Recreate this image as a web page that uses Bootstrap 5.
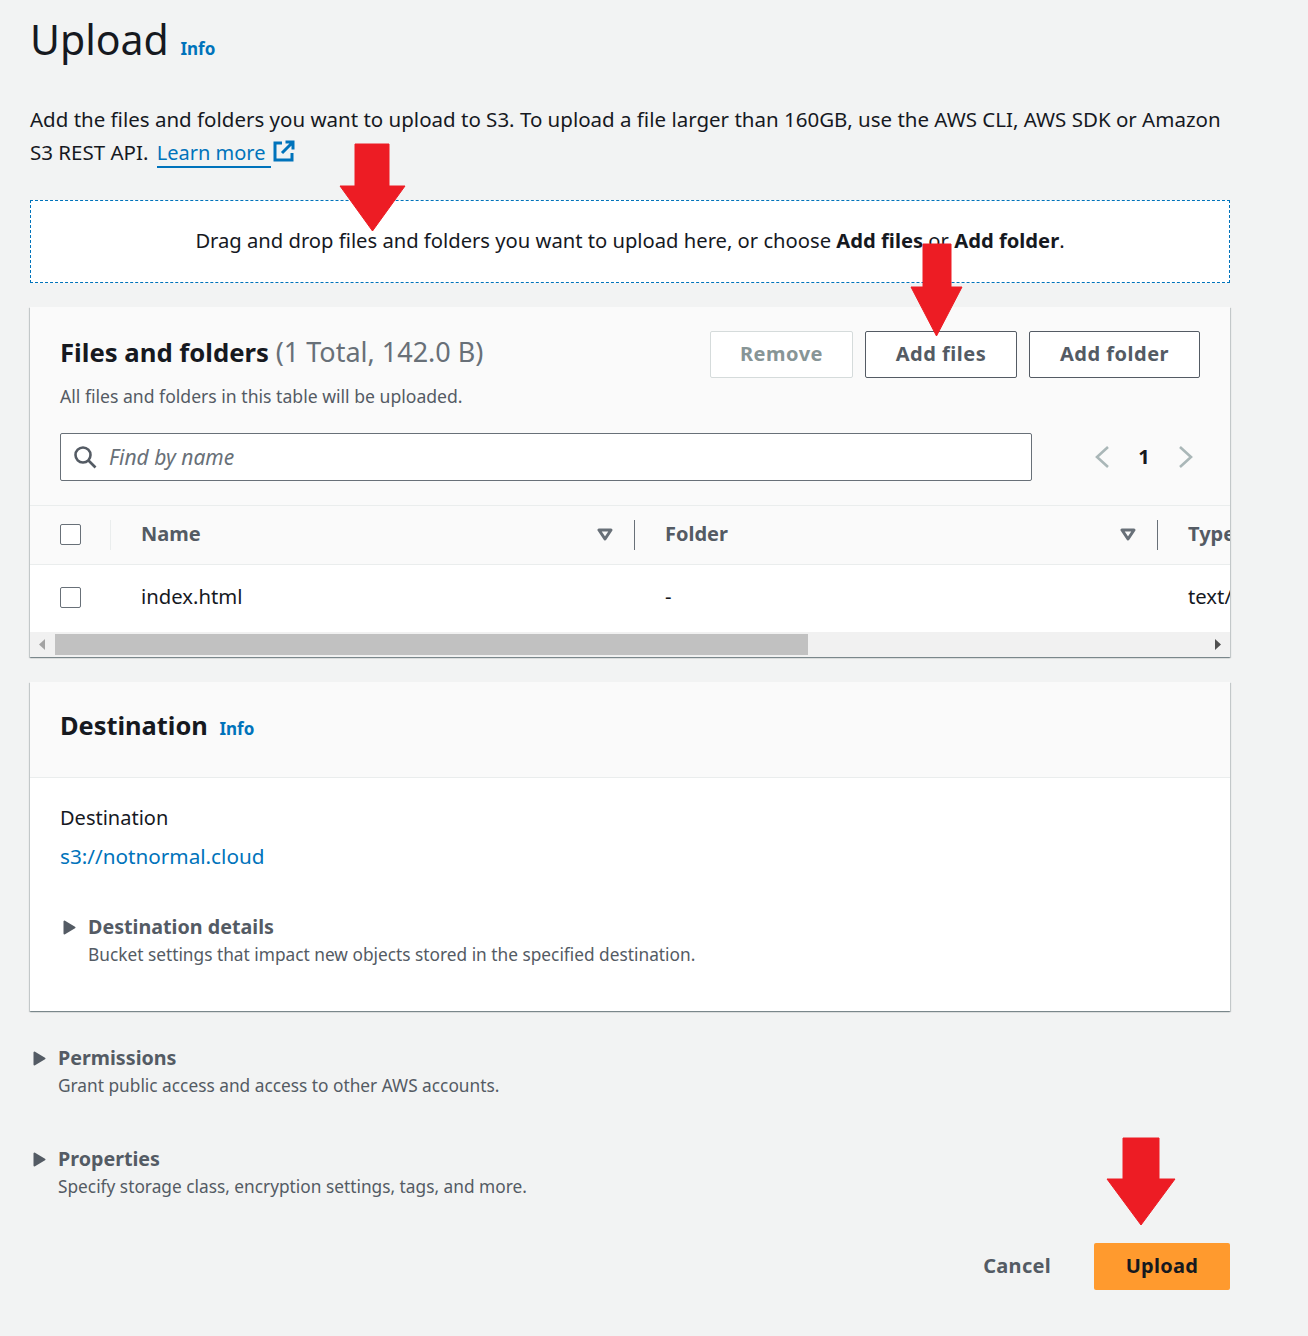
<!DOCTYPE html>
<html lang="en">
<head>
  <meta charset="UTF-8" />
  <title>Upload</title>
  <link rel="stylesheet" href="https://cdn.jsdelivr.net/npm/bootstrap@5.3.3/dist/css/bootstrap.min.css">
  <style>
    body { background: #f2f3f3; color: #16191f; font-family: "Noto Sans", sans-serif; font-size: 20px; }
    a { color: #0073bb; }
    .page-wrap { position: relative; width: 1308px; height: 1336px; padding: 0 78px 0 30px; overflow: hidden; }
    .page-title { font-size: 41px; font-weight: 400; line-height: 50px; margin: 0; padding-top: 14px; }
    .info-link { font-size: 17px; font-weight: 700; text-decoration: none; line-height: 1; }
    .page-title .info-link { margin-left: 1px; }
    .card-h2 .info-link { margin-left: 5px; }
    .intro { font-size: 20.5px; line-height: 33px; margin: 39px 0 31px; height: 66px; }
    .intro a { font-size: 20px; border-bottom: 2px solid #0073bb; text-decoration: none; padding-right: 6px; margin-left: 3px; }
    .intro svg { margin-left: -4px; margin-top: 2px; }
    .drop-zone { height: 83px; background: #fff; border: 1px dashed #0073bb; margin-bottom: 24px; padding-bottom: 2px; font-size: 20.2px; }
    .aws-card { border: 0; border-radius: 0; box-shadow: 0 1px 1px 0 rgba(0,28,36,.3), 1px 1px 1px 0 rgba(0,28,36,.15), -1px 1px 1px 0 rgba(0,28,36,.15); background: #fff; overflow: hidden; }
    .files-card { margin-bottom: 25px; }
    .files-head { background: #fafafa; height: 199px; padding: 24px 30px 0; border-bottom: 1px solid #eaeded; }
    .card-h2 { font-size: 25.7px; font-weight: 700; line-height: 44px; margin: -1px 0 0; }
    .card-h2 span { font-weight: 400; color: #687078; font-size: 27px; }
    .sub-text { font-size: 17.6px; color: #545b64; line-height: 24px; margin-top: 9px; }
    .aws-btn { font-size: 20px; font-weight: 700; height: 47px; padding: 0 0 2px; border: 1px solid #545b64; border-radius: 2px; color: #545b64; background: #fff; letter-spacing: .5px; }
    .aws-btn:disabled { color: #879596; border-color: #d5dbdb; background: #fff; opacity: 1; }
    .btn-remove { width: 143px; }
    .btn-files { width: 152px; }
    .btn-folder { width: 171px; }
    .btn-row { gap: 12px; }
    .search-row { margin-top: 25px; }
    .search-box { width: 972px; height: 48px; border: 1px solid #687078; border-radius: 2px; background: #fff; padding-left: 12px; }
    .search-box svg { flex: none; }
    .search-box input { border: 0; outline: 0; background: transparent; font-size: 21px; font-style: italic; width: 100%; padding: 2px 0 0; margin-left: 4px; }
    .search-box input::placeholder { color: #687078; opacity: 1; }
    .pager-wrap { margin-left: 62px; }
    .pager-num { font-size: 20px; font-weight: 700; width: 68px; text-align: center; }
    .file-table { table-layout: fixed; width: 1500px; margin: 0; }
    .file-table th, .file-table td { padding: 0; vertical-align: middle; border: 0; }
    .file-table thead tr { height: 58px; background: #fafafa; border-bottom: 1px solid #eaeded; }
    .file-table thead th { background: #fafafa; color: #545b64; font-size: 20px; font-weight: 700; }
    .file-table tbody tr { height: 68px; }
    .file-table tbody td { color: #16191f; font-size: 20.3px; padding-bottom: 2px; }
    .col-inner { height: 30px; display: flex; align-items: center; justify-content: space-between; padding-left: 30px; }
    .col-name { margin-top: -2px; }
    .file-table tbody .col-inner { padding-bottom: 2px; }
    .col-tools { gap: 21px; }
    .col-line { width: 1px; height: 30px; background: #687078; }
    .col-line-light { background: #eaeded; }
    .tick-box { width: 21px; height: 21px; border: 1px solid #687078; border-radius: 2px; margin: 0 0 0 30px; display: block; background: #fff; }
    .scroll-bar { height: 25px; background: #f1f1f1; }
    .scroll-thumb { width: 753px; height: 21px; background: #c1c1c1; margin: 2px 0 0 25px; }
    .dest-head { height: 96px; background: #fafafa; border-bottom: 1px solid #eaeded; padding: 0 30px 8px; }
    .dest-head .card-h2 { font-size: 25.4px; }
    .dest-body { height: 233px; padding: 24px 30px 0; }
    .dest-label { line-height: 32px; }
    .dest-link { text-decoration: none; line-height: 44px; display: block; font-size: 20.7px; }
    .dest-fold { margin-top: 35px; }
    .fold-title { font-size: 19.7px; font-weight: 700; color: #545b64; line-height: 28px; }
    .fold-arrow { width: 13px; height: 15px; flex: none; margin-right: 12px; margin-left: 3px; }
    .fold-desc { font-size: 17.3px; color: #545b64; line-height: 28px; padding-left: 28px; }
    .perm-block { margin-top: 33px; }
    .prop-block { margin-top: 45px; }
    .action-row { margin-top: 42px; gap: 43px; }
    .cancel-btn { font-size: 20px; font-weight: 700; color: #545b64; background: none; border: 0; padding: 0 0 2px; letter-spacing: .3px; }
    .upload-btn { width: 136px; height: 47px; background: #ff9a2e; border: 0; border-radius: 2px; font-size: 20px; font-weight: 700; color: #16191f; padding: 0 0 2px; letter-spacing: .3px; }
    .red-arrow { position: absolute; }
    .arrow-one { left: 339px; top: 143px; }
    .arrow-two { left: 910px; top: 243px; }
    .arrow-three { left: 1106px; top: 1137px; }
  </style>
</head>
<body class="m-0">
<div class="page-wrap">

  <h1 class="page-title">Upload <a href="#" class="info-link">Info</a></h1>

  <p class="intro">Add the files and folders you want to upload to S3. To upload a file larger than 160GB, use the AWS CLI, AWS SDK or Amazon S3 REST API. <a href="#">Learn more</a>
    <svg width="22" height="22" viewBox="0 0 22 22" fill="none" stroke="#0073bb" stroke-width="3" class="align-text-top"><path d="M9 3H2v17h17v-7M12.500 2H20v7.500M20 2 9 13"/></svg>
  </p>

  <div class="drop-zone d-flex align-items-center justify-content-center">
    <span>Drag and drop files and folders you want to upload here, or choose <b>Add files</b> or <b>Add folder</b>.</span>
  </div>

  <!-- Files and folders -->
  <div class="card aws-card files-card">
    <div class="files-head">
      <div class="d-flex justify-content-between">
        <div>
          <h2 class="card-h2">Files and folders <span>(1 Total, 142.0 B)</span></h2>
          <div class="sub-text">All files and folders in this table will be uploaded.</div>
        </div>
        <div class="d-flex btn-row">
          <button class="btn aws-btn btn-remove" disabled>Remove</button>
          <button class="btn aws-btn btn-files">Add files</button>
          <button class="btn aws-btn btn-folder">Add folder</button>
        </div>
      </div>
      <div class="d-flex align-items-center search-row">
        <div class="search-box d-flex align-items-center gap-2">
          <svg width="24" height="24" viewBox="0 0 24 24" fill="none" stroke="#545b64" stroke-width="2.6"><circle cx="10" cy="10" r="7.5"/><path d="m15.500 15.500 7 7"/></svg>
          <input type="text" placeholder="Find by name">
        </div>
        <div class="d-flex align-items-center pager-wrap">
          <svg width="16" height="24" viewBox="0 0 16 24" fill="none" stroke="#aab7b8" stroke-width="2.6"><path d="M14 2 3 12l11 10"/></svg>
          <span class="pager-num">1</span>
          <svg width="16" height="24" viewBox="0 0 16 24" fill="none" stroke="#aab7b8" stroke-width="2.6"><path d="m2 2 11 10L2 22"/></svg>
        </div>
      </div>
    </div>
    <table class="table file-table">
      <colgroup><col style="width:81px"><col style="width:524px"><col style="width:523px"><col></colgroup>
      <thead>
        <tr>
          <th><div class="d-flex align-items-center justify-content-between"><span class="tick-box"></span><span class="col-line col-line-light"></span></div></th>
          <th><div class="col-inner"><span class="col-name">Name</span><span class="d-flex align-items-center col-tools"><svg width="16" height="13" viewBox="0 0 16 13" fill="none" stroke="#687078" stroke-width="3" stroke-linejoin="round"><path d="M2 2h12L8 11z"/></svg><span class="col-line"></span></span></div></th>
          <th><div class="col-inner"><span class="col-name">Folder</span><span class="d-flex align-items-center col-tools"><svg width="16" height="13" viewBox="0 0 16 13" fill="none" stroke="#687078" stroke-width="3" stroke-linejoin="round"><path d="M2 2h12L8 11z"/></svg><span class="col-line"></span></span></div></th>
          <th><div class="col-inner"><span class="col-name">Type</span></div></th>
        </tr>
      </thead>
      <tbody>
        <tr>
          <td><span class="tick-box"></span></td>
          <td><div class="col-inner">index.html</div></td>
          <td><div class="col-inner">-</div></td>
          <td><div class="col-inner">text/html</div></td>
        </tr>
      </tbody>
    </table>
    <div class="scroll-bar d-flex align-items-start justify-content-between position-relative">
      <svg width="25" height="25" viewBox="0 0 25 25" class="position-absolute top-0 start-0"><path d="M15 7v11l-6-5.500z" fill="#a3a3a3"/></svg>
      <div class="scroll-thumb"></div>
      <svg width="25" height="25" viewBox="0 0 25 25"><path d="M10 7v11l6-5.500z" fill="#505050"/></svg>
    </div>
  </div>

  <!-- Destination -->
  <div class="card aws-card">
    <div class="dest-head d-flex align-items-center">
      <h2 class="card-h2">Destination <a href="#" class="info-link">Info</a></h2>
    </div>
    <div class="dest-body">
      <div class="dest-label">Destination</div>
      <a href="#" class="dest-link">s3://notnormal.cloud</a>
      <div class="d-flex align-items-center dest-fold">
        <svg class="fold-arrow" viewBox="0 0 13 15"><path d="M1.500 1.500v12l10-6z" fill="#545b64" stroke="#545b64" stroke-width="2" stroke-linejoin="round"/></svg>
        <div class="fold-title">Destination details</div>
      </div>
      <div class="fold-desc">Bucket settings that impact new objects stored in the specified destination.</div>
    </div>
  </div>

  <!-- Collapsed sections -->
  <div class="perm-block">
    <div class="d-flex align-items-center">
      <svg class="fold-arrow" viewBox="0 0 13 15"><path d="M1.500 1.500v12l10-6z" fill="#545b64" stroke="#545b64" stroke-width="2" stroke-linejoin="round"/></svg>
      <div class="fold-title">Permissions</div>
    </div>
    <div class="fold-desc">Grant public access and access to other AWS accounts.</div>
  </div>
  <div class="prop-block">
    <div class="d-flex align-items-center">
      <svg class="fold-arrow" viewBox="0 0 13 15"><path d="M1.500 1.500v12l10-6z" fill="#545b64" stroke="#545b64" stroke-width="2" stroke-linejoin="round"/></svg>
      <div class="fold-title">Properties</div>
    </div>
    <div class="fold-desc">Specify storage class, encryption settings, tags, and more.</div>
  </div>

  <div class="d-flex justify-content-end align-items-center action-row">
    <button class="cancel-btn">Cancel</button>
    <button class="upload-btn">Upload</button>
  </div>

  <!-- annotation arrows -->
  <svg class="red-arrow arrow-one" width="67" height="89" viewBox="0 0 67 89"><path d="M16 1h34v42h16L33.500 88 1 43h15z" fill="#ed1c24" stroke="#ed1c24" stroke-linejoin="round"/></svg>
  <svg class="red-arrow arrow-two" width="53" height="94" viewBox="0 0 53 94"><path d="M13 1h28v43h11L26.500 93 1 44h12z" fill="#ed1c24" stroke="#ed1c24" stroke-linejoin="round"/></svg>
  <svg class="red-arrow arrow-three" width="70" height="89" viewBox="0 0 70 89"><path d="M17 1h36v41h16L35 88 1 42h16z" fill="#ed1c24" stroke="#ed1c24" stroke-linejoin="round"/></svg>
</div>
<script src="https://cdn.jsdelivr.net/npm/bootstrap@5.3.3/dist/js/bootstrap.bundle.min.js"></script>
</body>
</html>
